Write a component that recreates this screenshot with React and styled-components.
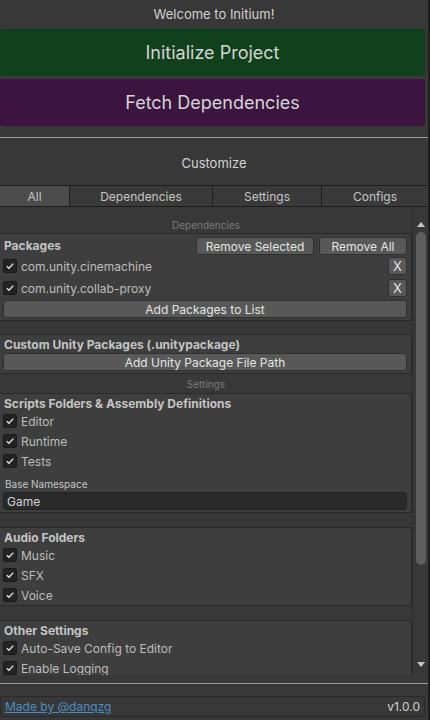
import React from "react";
import styled, { createGlobalStyle } from "styled-components";

const GlobalStyle = createGlobalStyle`
  html, body {
    margin: 0;
    padding: 0;
    background: #383838;
    overflow: hidden;
  }
  body {
    font-family: Inter, "Liberation Sans", sans-serif;
    color: #c4c4c4;
  }
`;

const packages = ["com.unity.cinemachine", "com.unity.collab-proxy"];

function CheckRow({ label }) {
  return (
    <Row>
      <Check>
        <svg width="10" height="10" viewBox="0 0 10 10">
          <path d="M1.8 5.2 L4 7.3 L8.3 2.6" fill="none" stroke="#e0e0e0" strokeWidth="1.4" />
        </svg>
      </Check>
      <RowText>{label}</RowText>
    </Row>
  );
}

function App() {
  return (
    <>
      <GlobalStyle />
      <Window>
        <Welcome>Welcome to Initium!</Welcome>
        <BigButton $bg="#11401c">Initialize Project</BigButton>
        <BigButton $bg="#3c1440">Fetch Dependencies</BigButton>
        <Separator $top={8} />
        <Heading>Customize</Heading>
        <Tabs>
          <Tab $w={70} $active>All</Tab>
          <Tab $w={143}>Dependencies</Tab>
          <Tab $w={109}>Settings</Tab>
          <Tab $w={106} $last>Configs</Tab>
        </Tabs>
        <ScrollArea>
          <Content>
            <SectionLabel>Dependencies</SectionLabel>
            <Box $pb={2}>
              <BoxHeader>
                <BoxTitle>Packages</BoxTitle>
                <SmallButton $w={118}>Remove Selected</SmallButton>
                <SmallButton $w={88}>Remove All</SmallButton>
              </BoxHeader>
              {packages.map((p) => (
                <PackageRow key={p}>
                  <CheckRow label={p} />
                  <XButton>X</XButton>
                </PackageRow>
              ))}
              <WideButton>Add Packages to List</WideButton>
            </Box>
            <Box $mt={13} $pb={2}>
              <BoxTitle>Custom Unity Packages (.unitypackage)</BoxTitle>
              <WideButton $mt={1}>Add Unity Package File Path</WideButton>
            </Box>
            <SectionLabel $small>Settings</SectionLabel>
            <Box $pb={2}>
              <BoxTitle>Scripts Folders &amp; Assembly Definitions</BoxTitle>
              <CheckRow label="Editor" />
              <CheckRow label="Runtime" />
              <CheckRow label="Tests" />
              <FieldLabel>Base Namespace</FieldLabel>
              <TextField>Game</TextField>
            </Box>
            <Box $mt={14} $pb={0}>
              <BoxTitle>Audio Folders</BoxTitle>
              <CheckRow label="Music" />
              <CheckRow label="SFX" />
              <CheckRow label="Voice" />
            </Box>
            <Box $mt={14} $pb={0}>
              <BoxTitle>Other Settings</BoxTitle>
              <CheckRow label="Auto-Save Config to Editor" />
              <CheckRow label="Enable Logging" />
            </Box>
          </Content>
          <Scrollbar>
            <Arrow viewBox="0 0 8 5">
              <path d="M0 5 L4 0 L8 5 Z" fill="#c8c8c8" />
            </Arrow>
            <Track>
              <Thumb />
            </Track>
            <Arrow viewBox="0 0 8 5">
              <path d="M0 0 L4 5 L8 0 Z" fill="#c8c8c8" />
            </Arrow>
          </Scrollbar>
        </ScrollArea>
        <Separator $top={8} />
        <Footer>
          <Link>Made by @danqzg</Link>
          <Version>v1.0.0</Version>
        </Footer>
      </Window>
    </>
  );
}

export default App;

const Window = styled.div`
  width: 428px;
  height: 720px;
  border-right: 2px solid #1f1f1f;
  display: flex;
  flex-direction: column;
  overflow: hidden;

  & > * {
    flex-shrink: 0;
  }
`;

const Welcome = styled.div`
  height: 29px;
  line-height: 29px;
  text-align: center;
  font-size: 13px;
  color: #d2d2d2;
`;

const BigButton = styled.div`
  height: 47px;
  margin: 0 3px 3px 0;
  background: ${(p) => p.$bg};
  border-radius: 3px;
  display: flex;
  align-items: center;
  justify-content: center;
  font-size: 18px;
  color: #d4d4d4;
`;

const Separator = styled.div`
  height: 1px;
  margin-top: ${(p) => p.$top}px;
  background: #9a9a9a;
`;

const Heading = styled.div`
  height: 47px;
  box-sizing: border-box;
  padding-top: 3px;
  display: flex;
  align-items: center;
  justify-content: center;
  font-size: 13px;
  color: #d2d2d2;
`;

const Tabs = styled.div`
  display: flex;
  height: 20px;
  border-top: 1px solid #1e1e1e;
  border-bottom: 1px solid #1e1e1e;
`;

const Tab = styled.div`
  width: ${(p) => p.$w}px;
  box-sizing: border-box;
  border-right: ${(p) => (p.$last ? "none" : "1px solid #1e1e1e")};
  background: ${(p) => (p.$active ? "#4c4c4c" : "#3a3a3a")};
  display: flex;
  align-items: center;
  justify-content: center;
  font-size: 12px;
  color: #c4c4c4;
`;

const ScrollArea = styled.div`
  height: 468px;
  display: flex;
  overflow: hidden;
`;

const Content = styled.div`
  width: 412px;
  display: flex;
  flex-direction: column;
  overflow: hidden;

  & > * {
    flex-shrink: 0;
  }
`;

const SectionLabel = styled.div`
  height: ${(p) => (p.$small ? 19 : 26)}px;
  display: flex;
  align-items: flex-end;
  justify-content: center;
  padding-bottom: ${(p) => (p.$small ? 3 : 2)}px;
  box-sizing: border-box;
  font-size: 10px;
  line-height: 12px;
  color: #7b7b7b;
`;

const Box = styled.div`
  margin-top: ${(p) => p.$mt || 0}px;
  background: #3e3e3e;
  border: 1px solid #2a2a2a;
  border-left: none;
  border-radius: 0 3px 3px 0;
  padding: 2px 4px ${(p) => p.$pb}px 3px;
  display: flex;
  flex-direction: column;
`;

const BoxHeader = styled.div`
  display: flex;
  align-items: center;
  gap: 5px;
  height: 20px;
`;

const BoxTitle = styled.div`
  flex: 1;
  height: 16px;
  line-height: 15px;
  font-size: 12px;
  font-weight: 700;
  color: #c4c4c4;
  padding-left: 1px;
`;

const SmallButton = styled.div`
  width: ${(p) => p.$w}px;
  height: 18px;
  box-sizing: border-box;
  background: #585858;
  border: 1px solid #303030;
  border-radius: 3px;
  display: flex;
  align-items: center;
  justify-content: center;
  font-size: 12px;
  color: #e4e4e4;
`;

const PackageRow = styled.div`
  display: flex;
  align-items: center;
  justify-content: space-between;
  height: 20px;
  margin-bottom: 2px;
`;

const XButton = styled(SmallButton)`
  width: 19px;
  font-size: 13px;
`;

const WideButton = styled(SmallButton)`
  width: auto;
  margin-top: ${(p) => p.$mt || 0}px;
`;

const Row = styled.div`
  display: flex;
  align-items: center;
  gap: 4px;
  height: 20px;
`;

const Check = styled.div`
  width: 14px;
  height: 14px;
  box-sizing: border-box;
  background: #232323;
  border: 1px solid #1a1a1a;
  border-radius: 2px;
  display: flex;
  align-items: center;
  justify-content: center;
`;

const RowText = styled.span`
  font-size: 12px;
  color: #bdbdbd;
`;

const FieldLabel = styled.div`
  margin-top: 6px;
  font-size: 10px;
  line-height: 14px;
  color: #c4c4c4;
  padding-left: 2px;
`;

const TextField = styled.div`
  height: 18px;
  margin-top: 1px;
  box-sizing: border-box;
  background: #2a2a2a;
  border: 1px solid #212121;
  border-radius: 3px;
  padding-left: 3px;
  display: flex;
  align-items: center;
  font-size: 12px;
  color: #d2d2d2;
`;

const Scrollbar = styled.div`
  width: 16px;
  border-left: 1px solid #2e2e2e;
  display: flex;
  flex-direction: column;
  align-items: center;
  padding: 15px 0 8px;
  box-sizing: border-box;
  gap: 4px;
`;

const Arrow = styled.svg`
  width: 8px;
  height: 5px;
  flex-shrink: 0;
`;

const Track = styled.div`
  flex: 1;
  width: 10px;
  padding-top: 1px;
`;

const Thumb = styled.div`
  height: 333px;
  background: #5e5e5e;
  border-radius: 5px;
`;

const Footer = styled.div`
  margin: 12px 3px 0 0;
  height: 21px;
  box-sizing: border-box;
  border: 1px solid #2a2a2a;
  border-radius: 3px;
  background: #383838;
  display: flex;
  align-items: center;
  justify-content: space-between;
  padding: 0 4px;
  font-size: 12px;
`;

const Link = styled.span`
  color: #4a8ec3;
  text-decoration: underline;
`;

const Version = styled.span`
  color: #d2d2d2;
`;
